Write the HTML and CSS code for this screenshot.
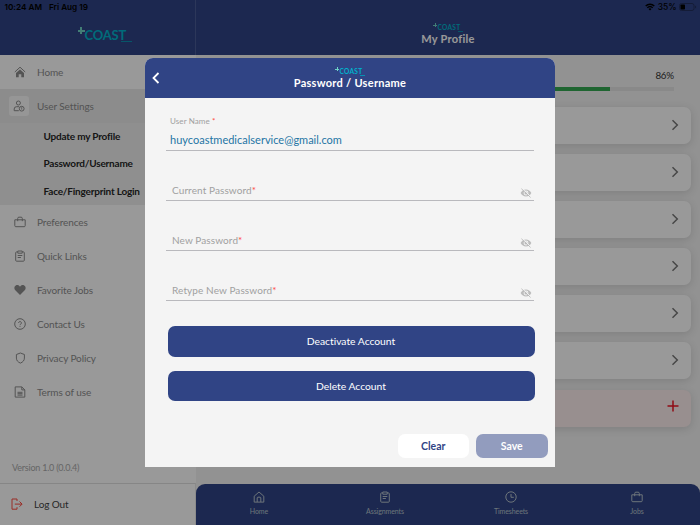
FILE: index.html
```html
<!DOCTYPE html>
<html lang="en">
<head>
    <meta charset="UTF-8">
    <meta name="viewport" content="width=device-width, initial-scale=1.0">
    <title>Password / Username</title>
    <link rel="stylesheet" href="styles.css">
</head>
<body>
<!-- shared icons -->
<svg class="icon-defs" width="0" height="0">
    <symbol id="i-bag" viewBox="0 0 12 12"><path d="M.8 3.8h10.400v5.900a1 1 0 0 1-1 1H1.800a1 1 0 0 1-1-1zM3.700 5.200V2.400a1.200 1.200 0 0 1 1.200-1.200h2.200a1.200 1.200 0 0 1 1.200 1.200v2.800"/></symbol>
    <symbol id="i-clip" viewBox="0 0 12 12"><path d="M3.8 1.9H2.6a.9.9 0 0 0-.9.9v7.5a.9.9 0 0 0 .9.9h6.8a.9.9 0 0 0 .9-.9V2.8a.9.9 0 0 0-.9-.9H8.2M3.8 1h4.4v2.2H3.8zM3.7 5.5h4.6M3.7 7.5h3.2"/></symbol>
    <symbol id="i-right" viewBox="0 0 8 12"><path d="M1.500 1.200L6.300 6l-4.800 4.800"/></symbol>
    <symbol id="i-eye" viewBox="0 0 12 10"><path fill="#bdbdbd" stroke="none" fill-rule="evenodd" d="M.6 5C1.800 2.800 3.700 1.600 6 1.600S10.200 2.800 11.400 5C10.200 7.200 8.300 8.400 6 8.400S1.800 7.200.6 5zM6 2.600a2.400 2.400 0 1 0 0 4.800 2.400 2.400 0 0 0 0-4.800z"/><circle cx="6" cy="5" r="1.500" fill="#bdbdbd" stroke="none"/><path d="M2.300.7l8.700 8.200" stroke="#f4f4f4" stroke-width="1"/><path d="M1.400.7l9.200 8.800" stroke="#b4b4b4" stroke-width=".8"/></symbol>
</svg>

<div class="app">
    <aside class="sidebar">
        <div class="side-header">
            <div class="status-left"><span>10:24 AM</span><span>Fri Aug 19</span></div>
            <div class="logo logo-big"><i class="plus"></i><span>COAST</span><i class="dash"></i></div>
        </div>
        <nav class="menu">
            <a class="menu-item">
                <svg class="icon" viewBox="0 0 12 12"><path d="M.8 6L6 1.200 11.200 6"/><path class="solid" d="M2 6.900L6 3.400l4 3.500v4.300H7.300V8.200H4.700v3H2z"/></svg>
                <span>Home</span>
            </a>
            <a class="menu-item active">
                <span class="icon-box"><svg class="icon" viewBox="0 0 12 12"><circle cx="5.400" cy="3" r="2"/><path d="M5.800 10.700H1.200V9a2.300 2.300 0 0 1 2.300-2.300h2.600"/><circle cx="8.700" cy="8.700" r="2.400"/><path d="M8.700 7.300v1.500M8.700 9.500v.5"/></svg></span>
                <span>User Settings</span>
            </a>
            <div class="submenu">
                <a>Update my Profile</a>
                <a>Password/Username</a>
                <a>Face/Fingerprint Login</a>
            </div>
            <a class="menu-item"><svg class="icon"><use href="#i-bag"/></svg><span>Preferences</span></a>
            <a class="menu-item"><svg class="icon"><use href="#i-clip"/></svg><span>Quick Links</span></a>
            <a class="menu-item">
                <svg class="icon" viewBox="0 0 12 12"><path class="solid" d="M6 11L1.300 6.300C-.2 4.700.2 2.400 1.800 1.500 3.300.7 5 1.200 6 2.700 7 1.200 8.700.7 10.200 1.500c1.600.9 2 3.200.5 4.800z"/></svg>
                <span>Favorite Jobs</span>
            </a>
            <a class="menu-item">
                <svg class="icon" viewBox="0 0 12 12"><circle cx="6" cy="6" r="5.300"/><path d="M4.600 5a1.400 1.400 0 1 1 2.200 1.100C6.200 6.400 6 6.600 6 7.200M6 8.200v.8"/></svg>
                <span>Contact Us</span>
            </a>
            <a class="menu-item">
                <svg class="icon" viewBox="0 0 12 12"><path d="M6.400 1l4 1.500v3.600c0 2.300-1.500 4-4 5-2.500-1-4-2.700-4-5V2.500z"/></svg>
                <span>Privacy Policy</span>
            </a>
            <a class="menu-item">
                <svg class="icon" viewBox="0 0 12 12"><path d="M1.200.9h6.600l3 3v7.200H1.200zM7.800.9v3h3"/><path d="M3.500 6.300h5M3.500 7.700h5M3.500 9.100h5"/></svg>
                <span>Terms of use</span>
            </a>
        </nav>
        <div class="version">Version 1.0 (0.0.4)</div>
        <div class="logout">
            <svg class="icon" viewBox="0 0 12 12"><path d="M6 1H1v10.200h5M6 3V1M6 11.200v-2M3.800 6.100h7M8.500 3.500l2.600 2.600-2.600 2.600"/></svg>
            <span>Log Out</span>
        </div>
    </aside>

    <main class="content">
        <header class="page-header">
            <div class="status-right">
                <svg class="wifi" viewBox="0 0 10 8"><path d="M.7 3a6.200 6.200 0 0 1 8.600 0M2.300 4.700a3.900 3.900 0 0 1 5.400 0"/><path class="solid" d="M5 7.600L3.500 6a2.200 2.200 0 0 1 3 0z"/></svg>
                <span>35%</span>
                <svg class="battery" viewBox="0 0 18 8"><rect x=".5" y=".5" width="14.500" height="7" rx="2"/><path d="M16.600 2.800v2.400"/><rect class="solid" x="1.500" y="1.500" width="4.500" height="5" rx=".8"/></svg>
            </div>
            <div class="logo"><i class="plus"></i><span>COAST</span><i class="dash"></i></div>
            <h1>My Profile</h1>
        </header>
        <div class="progress">
            <span>86%</span>
            <div class="bar"><div class="bar-fill" style="width: 86%"></div></div>
        </div>
        <div class="cards">
            <div class="card"><svg><use href="#i-right"/></svg></div>
            <div class="card"><svg><use href="#i-right"/></svg></div>
            <div class="card"><svg><use href="#i-right"/></svg></div>
            <div class="card"><svg><use href="#i-right"/></svg></div>
            <div class="card"><svg><use href="#i-right"/></svg></div>
            <div class="card"><svg><use href="#i-right"/></svg></div>
            <div class="card card-add"><svg viewBox="0 0 12 12"><path d="M6 .5v11M.5 6h11"/></svg></div>
        </div>
        <nav class="tabs">
            <a><svg viewBox="0 0 12 12"><path d="M1.200 5.200L6 1l4.800 4.200v5.900H1.200zM4.200 11V7a.8.8 0 0 1 .8-.8h2a.8.8 0 0 1 .8.8v4"/></svg>Home</a>
            <a><svg><use href="#i-clip"/></svg>Assignments</a>
            <a><svg viewBox="0 0 12 12"><circle cx="6" cy="6" r="5.200"/><path d="M6 3v3.300h2.800"/></svg>Timesheets</a>
            <a><svg><use href="#i-bag"/></svg>Jobs</a>
        </nav>
    </main>
</div>

<div class="overlay">
    <div class="modal">
        <header class="modal-header">
            <svg class="back" viewBox="0 0 8 12"><path d="M6.500 1L1.500 6l5 5"/></svg>
            <div class="logo"><i class="plus"></i><span>COAST</span><i class="dash"></i></div>
            <h2>Password / Username</h2>
        </header>
        <form class="form">
            <div class="field filled">
                <label>User Name <b>*</b></label>
                <span class="value">huycoastmedicalservice@gmail.com</span>
            </div>
            <div class="field"><label>Current Password<b>*</b></label><svg class="eye"><use href="#i-eye"/></svg></div>
            <div class="field"><label>New Password<b>*</b></label><svg class="eye"><use href="#i-eye"/></svg></div>
            <div class="field"><label>Retype New Password<b>*</b></label><svg class="eye"><use href="#i-eye"/></svg></div>
            <button type="button" class="btn-main">Deactivate Account</button>
            <button type="button" class="btn-main">Delete Account</button>
            <div class="actions">
                <button type="button" class="btn-clear">Clear</button>
                <button type="button" class="btn-save">Save</button>
            </div>
        </form>
    </div>
</div>
</body>
</html>
```
FILE: styles.css
```css
* {
    box-sizing: border-box;
}

body {
    margin: 0;
    width: 700px;
    height: 525px;
    overflow: hidden;
    font-family: Lato, "Liberation Sans", sans-serif;
    font-size: 10px;
    font-variant-ligatures: none;
}

svg {
    display: block;
    fill: none;
    stroke: currentColor;
    stroke-width: 1;
    flex: none;
}

.solid {
    fill: currentColor;
    stroke: none;
}

.icon-defs {
    position: absolute;
}

h1, h2 {
    margin: 0;
    font-size: 11px;
    line-height: 14px;
    font-weight: bold;
    letter-spacing: 0.28px;
    color: white;
}

.app {
    display: flex;
    height: 525px;
}

/* sidebar */
.sidebar {
    width: 196px;
    display: flex;
    flex-direction: column;
    background: white;
}

.side-header {
    height: 55px;
    background: #304485;
    border-right: 1px solid #4a5c96;
    display: flex;
    flex-direction: column;
}

.status-left, .status-right {
    font-family: Inter, sans-serif;
    font-size: 8.2px;
    font-weight: 600;
    line-height: 14px;
    display: flex;
}

.status-left {
    gap: 7px;
    padding-left: 4.5px;
}

.status-right {
    align-self: flex-end;
    align-items: center;
    gap: 2.5px;
    height: 14px;
    padding-right: 3px;
    font-size: 8.4px;
    font-weight: 500;
}

.wifi {
    width: 10px;
    height: 8px;
    stroke-width: 1.4;
}

.battery {
    width: 18px;
    height: 8px;
}

.battery rect:first-child, .battery path {
    stroke: #222f5c;
}

.logo {
    display: flex;
    align-items: flex-start;
    color: #00b3cc;
    font-size: 6.6px;
    font-weight: bold;
    line-height: 9px;
    letter-spacing: 0.3px;
}

.plus {
    width: 4px;
    height: 4px;
    background: linear-gradient(#6fd3c5, #6fd3c5) center / 4px 1px no-repeat, linear-gradient(#6fd3c5, #6fd3c5) center / 1px 4px no-repeat;
}

.dash {
    width: 5px;
    height: 1px;
    margin: 8px 0 0 -3px;
    background: #0a8fb0;
}

.logo-big {
    margin: 12px 0 0 77.500px;
    font-size: 13px;
    line-height: 19px;
    letter-spacing: -0.2px;
    font-weight: bold;
}

.logo-big .plus {
    width: 7px;
    height: 7px;
    margin-top: 1px;
    background: linear-gradient(#6fd3c5, #6fd3c5) center / 7px 2px no-repeat, linear-gradient(#6fd3c5, #6fd3c5) center / 2px 7px no-repeat;
}

.logo-big .dash {
    width: 11px;
    margin: 15px 0 0 -5px;
}

.menu-item {
    display: flex;
    align-items: center;
    height: 34.1px;
    padding: 0 0 1px 13.500px;
    color: #8c8c8c;
    letter-spacing: -0.1px;
}

.menu-item span:last-child {
    margin-left: 11.500px;
}

.icon {
    width: 12px;
    height: 12px;
}

.menu-item.active {
    background: #eaeaea;
    padding-left: 9px;
}

.icon-box {
    width: 20px;
    height: 20px;
    border-radius: 3px;
    background: #fafafa;
    display: grid;
    place-items: center;
}

.menu-item.active span:last-child {
    margin-left: 8px;
}

.submenu {
    height: 82px;
    background: #efefef;
    display: flex;
    flex-direction: column;
    padding-left: 43.5px;
    color: #262626;
    font-weight: bold;
    letter-spacing: -0.2px;
}

.submenu a {
    line-height: 27.300px;
}

.version {
    margin-top: auto;
    padding: 0 12px;
    font-size: 9px;
    line-height: 14px;
    letter-spacing: -0.22px;
    color: #aaa;
    margin-bottom: 8px;
}

.logout {
    height: 42px;
    border-top: 1px solid #e0e0e0;
    border-right: 1px solid #e8e8e8;
    display: flex;
    align-items: center;
    gap: 11px;
    padding: 0 0 1px 11px;
    font-size: 10px;
    letter-spacing: -0.1px;
    color: #444;
}

.logout .icon {
    color: #ff4a40;
}

/* page behind the dialog */
.content {
    flex: 1;
    display: flex;
    flex-direction: column;
    background: #f3f3f3;
}

.page-header {
    height: 55px;
    background: #304485;
    display: flex;
    flex-direction: column;
    align-items: center;
}

.page-header .logo {
    margin-top: 9px;
}

.page-header h1 {
    margin-top: 0;
}

.progress {
    padding: 13px 26px 0 21px;
    height: 52px;
    font-size: 9.800px;
    line-height: 14px;
    letter-spacing: -0.2px;
    color: #333;
    text-align: right;
}

.bar {
    height: 4px;
    margin-top: 5px;
    background: #e4e4e4;
}

.bar-fill {
    height: 100%;
    background: #34a853;
}

.cards {
    display: flex;
    flex-direction: column;
    gap: 10.100px;
    padding: 0 9px;
}

.card {
    height: 37px;
    border-radius: 7px;
    background: white;
    box-shadow: 0 2px 8px rgba(0, 0, 0, 0.13);
    display: flex;
    align-items: center;
    justify-content: flex-end;
    padding: 0 12px 2px 0;
    color: #777;
}

.card svg {
    width: 8px;
    height: 12px;
    stroke-width: 1.500;
}

.card-add {
    background: #fdeeee;
    color: #f01525;
}

.card-add svg {
    width: 12px;
    margin-bottom: 2px;
}

.tabs {
    height: 41px;
    margin-top: auto;
    border-radius: 9px 9px 0 0;
    background: #304485;
    display: flex;
    color: #b5c2cc;
    font-size: 7px;
    line-height: 10px;
    letter-spacing: -0.1px;
}

.tabs a {
    flex: 1;
    display: flex;
    flex-direction: column;
    align-items: center;
    gap: 3px;
    padding-top: 7px;
}

.tabs svg {
    width: 12px;
    height: 12px;
}

/* dialog */
.overlay {
    position: absolute;
    inset: 0;
    width: 700px;
    height: 525px;
    background: rgba(0, 0, 0, 0.4);
    display: grid;
    place-items: center;
}

.modal {
    width: 410px;
    height: 409px;
    background: #f4f4f4;
    border-radius: 8px 8px 0 0;
    overflow: hidden;
}

.modal-header {
    position: relative;
    height: 40px;
    background: #304485;
    display: flex;
    flex-direction: column;
    align-items: center;
    padding-top: 9px;
}

.back {
    position: absolute;
    left: 7px;
    top: 14px;
    width: 8px;
    height: 12px;
    color: white;
    stroke-width: 1.800;
}

.form {
    display: flex;
    flex-direction: column;
    padding: 0 21px;
}

.field {
    height: 50px;
    border-bottom: 1px solid #b9b9bd;
    display: flex;
    align-items: flex-end;
    justify-content: space-between;
    padding: 0 2px 1px 6px;
    color: #a0a0a0;
    line-height: 17px;
    letter-spacing: 0.1px;
}

.field b {
    color: #ff4a44;
    font-weight: normal;
}

.field.filled {
    height: 53px;
    flex-direction: column;
    align-items: flex-start;
    justify-content: flex-end;
    padding: 0 4px 2px;
    font-size: 8px;
}

.field.filled label {
    line-height: 14px;
    margin-bottom: 3px;
}

.value {
    font-size: 11px;
    letter-spacing: 0;
    color: #2474a4;
}

.eye {
    width: 12px;
    height: 10px;
    margin-bottom: 1px;
}

button {
    font-family: inherit;
    font-variant-ligatures: none;
    border: none;
    padding: 0;
    color: white;
}

.btn-main {
    width: 367px;
    height: 30.500px;
    margin: 25px 0 0 1.500px;
    border-radius: 7px;
    background: #304485;
    font-size: 10.300px;
}

.btn-main + .btn-main {
    margin-top: 14px;
}

.actions {
    display: flex;
    gap: 7px;
    margin: 33px 0 0 231.500px;
}

.actions button {
    width: 71.500px;
    height: 24px;
    border-radius: 7px;
    font-size: 10.500px;
    font-weight: bold;
    flex: none;
}

.actions .btn-clear {
    background: white;
    color: #304485;
}

.actions .btn-save {
    background: #929cbe;
}
```
